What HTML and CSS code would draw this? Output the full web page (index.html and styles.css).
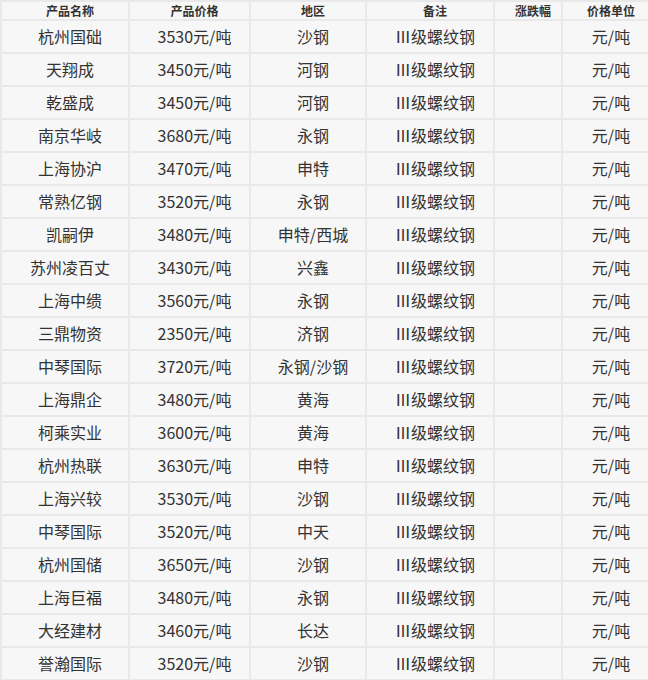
FILE: index.html
```html
<!DOCTYPE html>
<html lang="zh-CN">
<head>
<meta charset="utf-8">
<link rel="stylesheet" href="styles.css">
</head>
<body>
<table class="price-table">
<colgroup>
<col class="c1"><col class="c2"><col class="c3"><col class="c4"><col class="c5"><col class="c6">
</colgroup>
<thead>
<tr><th>产品名称</th><th>产品价格</th><th>地区</th><th>备注</th><th>涨跌幅</th><th>价格单位</th></tr>
</thead>
<tbody>
<tr><td>杭州国础</td><td>3530元/吨</td><td>沙钢</td><td>Ⅲ级螺纹钢</td><td></td><td>元/吨</td></tr>
<tr><td>天翔成</td><td>3450元/吨</td><td>河钢</td><td>Ⅲ级螺纹钢</td><td></td><td>元/吨</td></tr>
<tr><td>乾盛成</td><td>3450元/吨</td><td>河钢</td><td>Ⅲ级螺纹钢</td><td></td><td>元/吨</td></tr>
<tr><td>南京华岐</td><td>3680元/吨</td><td>永钢</td><td>Ⅲ级螺纹钢</td><td></td><td>元/吨</td></tr>
<tr><td>上海协沪</td><td>3470元/吨</td><td>申特</td><td>Ⅲ级螺纹钢</td><td></td><td>元/吨</td></tr>
<tr><td>常熟亿钢</td><td>3520元/吨</td><td>永钢</td><td>Ⅲ级螺纹钢</td><td></td><td>元/吨</td></tr>
<tr><td>凯嗣伊</td><td>3480元/吨</td><td>申特/西城</td><td>Ⅲ级螺纹钢</td><td></td><td>元/吨</td></tr>
<tr><td>苏州凌百丈</td><td>3430元/吨</td><td>兴鑫</td><td>Ⅲ级螺纹钢</td><td></td><td>元/吨</td></tr>
<tr><td>上海中缋</td><td>3560元/吨</td><td>永钢</td><td>Ⅲ级螺纹钢</td><td></td><td>元/吨</td></tr>
<tr><td>三鼎物资</td><td>2350元/吨</td><td>济钢</td><td>Ⅲ级螺纹钢</td><td></td><td>元/吨</td></tr>
<tr><td>中琴国际</td><td>3720元/吨</td><td>永钢/沙钢</td><td>Ⅲ级螺纹钢</td><td></td><td>元/吨</td></tr>
<tr><td>上海鼎企</td><td>3480元/吨</td><td>黄海</td><td>Ⅲ级螺纹钢</td><td></td><td>元/吨</td></tr>
<tr><td>柯乘实业</td><td>3600元/吨</td><td>黄海</td><td>Ⅲ级螺纹钢</td><td></td><td>元/吨</td></tr>
<tr><td>杭州热联</td><td>3630元/吨</td><td>申特</td><td>Ⅲ级螺纹钢</td><td></td><td>元/吨</td></tr>
<tr><td>上海兴较</td><td>3530元/吨</td><td>沙钢</td><td>Ⅲ级螺纹钢</td><td></td><td>元/吨</td></tr>
<tr><td>中琴国际</td><td>3520元/吨</td><td>中天</td><td>Ⅲ级螺纹钢</td><td></td><td>元/吨</td></tr>
<tr><td>杭州国储</td><td>3650元/吨</td><td>沙钢</td><td>Ⅲ级螺纹钢</td><td></td><td>元/吨</td></tr>
<tr><td>上海巨福</td><td>3480元/吨</td><td>永钢</td><td>Ⅲ级螺纹钢</td><td></td><td>元/吨</td></tr>
<tr><td>大经建材</td><td>3460元/吨</td><td>长达</td><td>Ⅲ级螺纹钢</td><td></td><td>元/吨</td></tr>
<tr><td>誉瀚国际</td><td>3520元/吨</td><td>沙钢</td><td>Ⅲ级螺纹钢</td><td></td><td>元/吨</td></tr>
</tbody>
</table>
</body>
</html>
```

FILE: styles.css
```css
html, body {
  margin: 0;
  padding: 0;
  background: #f7f7f7;
}
.price-table {
  border-collapse: collapse;
  table-layout: fixed;
  width: 649px;
  margin: 0;
  font-family: "Noto Sans CJK SC", "Noto Sans", sans-serif;
  color: #333;
  background: #f7f7f7;
}
.c1 { width: 128px; }
.c2 { width: 121px; }
.c3 { width: 116px; }
.c4 { width: 128px; }
.c5 { width: 68px; }
.c6 { width: 88px; }
.price-table th,
.price-table td {
  border: 2px solid #e9e9e9;
  text-align: center;
  padding: 0 0 0 10px;
  white-space: nowrap;
  overflow: hidden;
}
.price-table th {
  font-size: 12px;
  font-weight: bold;
  height: 17px;
  line-height: 17px;
  color: #333;
}
.price-table td {
  font-size: 16px;
  height: 31px;
  line-height: 31px;
}
```
